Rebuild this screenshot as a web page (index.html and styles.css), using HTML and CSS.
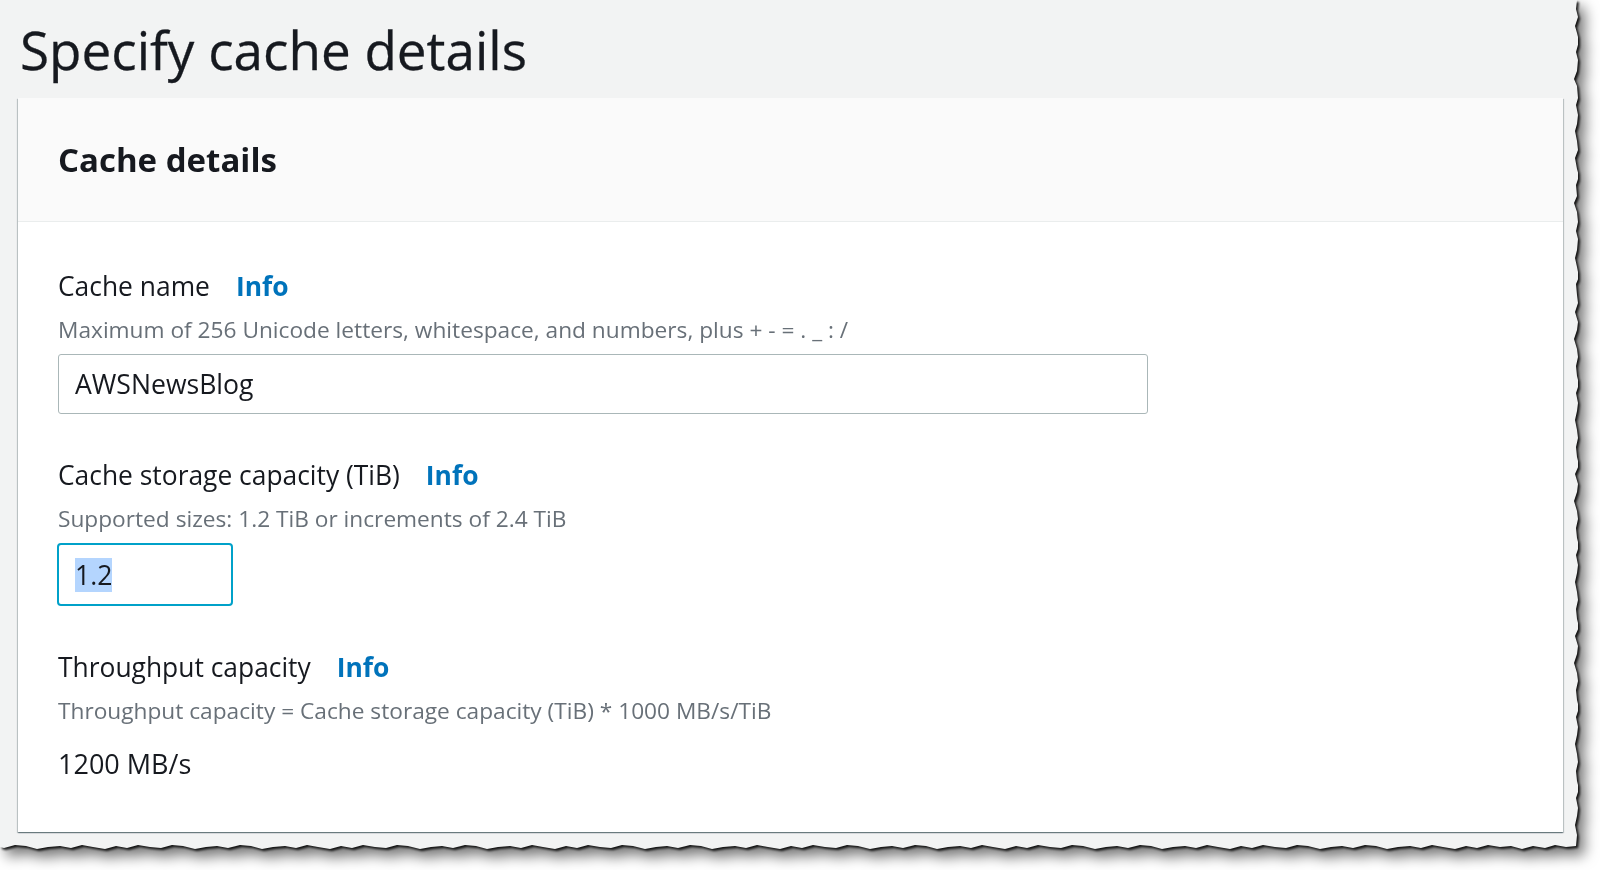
FILE: index.html
```html
<!DOCTYPE html>
<html lang="en">
<head>
<meta charset="utf-8">
<title>Specify cache details</title>
<link rel="stylesheet" href="styles.css">
</head>
<body>
<div class="sheet-wrap">
  <div class="sheet">
    <h1 class="title">Specify cache details</h1>
    <section class="card">
      <header class="card-header">
        <h2 class="card-title">Cache details</h2>
      </header>
      <div class="card-body">
        <div class="field">
          <div class="label-row"><span class="label">Cache name</span><a class="info">Info</a></div>
          <div class="desc">Maximum of 256 Unicode letters, whitespace, and numbers, plus + - = . _ : /</div>
          <div class="input input-wide">AWSNewsBlog</div>
        </div>
        <div class="field">
          <div class="label-row"><span class="label">Cache storage capacity (TiB)</span><a class="info">Info</a></div>
          <div class="desc">Supported sizes: 1.2 TiB or increments of 2.4 TiB</div>
          <div class="input input-small input-focus"><span class="selected">1.2</span></div>
        </div>
        <div class="field">
          <div class="label-row"><span class="label">Throughput capacity</span><a class="info">Info</a></div>
          <div class="desc">Throughput capacity = Cache storage capacity (TiB) * 1000 MB/s/TiB</div>
          <div class="value">1200 MB/s</div>
        </div>
      </div>
    </section>
  </div>
</div>
</body>
</html>
```

FILE: styles.css
```css
html, body {
  margin: 0;
  padding: 0;
  background: #ffffff;
}

body {
  font-family: "Open Sans", "Noto Sans", Arial, sans-serif;
  color: #16191f;
  width: 1600px;
  height: 870px;
  overflow: hidden;
}

.sheet-wrap {
  width: 1578px;
  height: 850px;
  filter: drop-shadow(2px 2px 1px rgba(0, 0, 0, 0.85)) drop-shadow(6px 7px 7px rgba(0, 0, 0, 0.55));
}

.sheet {
  width: 1578px;
  height: 850px;
  background: #f2f3f3;
  box-sizing: border-box;
  padding-top: 20px;
  clip-path: polygon(
    0 0, 1577px 0, 1576px 9px, 1578px 17px, 1575px 26px, 1577px 33px, 1579px 41px, 1576px 52px,
    1578px 60px, 1577px 71px, 1574px 79px, 1577px 86px, 1578px 98px, 1576px 105px, 1578px 115px,
    1577px 124px, 1575px 131px, 1577px 141px, 1578px 150px, 1575px 158px, 1577px 169px, 1579px 176px,
    1576px 185px, 1577px 196px, 1574px 203px, 1577px 212px, 1578px 222px, 1576px 231px, 1578px 239px,
    1577px 250px, 1575px 258px, 1577px 267px, 1579px 277px, 1576px 284px, 1577px 295px, 1578px 303px,
    1575px 312px, 1578px 322px, 1577px 330px, 1574px 339px, 1577px 349px, 1578px 357px, 1576px 366px,
    1577px 376px, 1579px 384px, 1576px 393px, 1578px 403px, 1577px 411px, 1575px 420px, 1577px 430px,
    1578px 438px, 1576px 447px, 1577px 457px, 1579px 465px, 1575px 474px, 1578px 484px, 1577px 492px,
    1574px 501px, 1577px 511px, 1578px 519px, 1576px 528px, 1577px 538px, 1579px 546px, 1576px 555px,
    1578px 565px, 1577px 573px, 1575px 582px, 1577px 592px, 1578px 600px, 1576px 609px, 1577px 619px,
    1579px 627px, 1575px 636px, 1578px 646px, 1577px 654px, 1574px 663px, 1577px 673px, 1578px 681px,
    1576px 690px, 1577px 700px, 1579px 708px, 1576px 717px, 1578px 727px, 1577px 735px, 1575px 744px,
    1577px 754px, 1578px 762px, 1576px 771px, 1577px 781px, 1579px 789px, 1576px 798px, 1578px 808px,
    1577px 816px, 1575px 825px, 1577px 835px, 1576px 846px,
    1566px 847px, 1555px 845px, 1545px 848px, 1533px 846px, 1522px 849px, 1511px 846px, 1500px 847px,
    1488px 845px, 1477px 848px, 1466px 846px, 1455px 849px, 1443px 847px, 1432px 845px, 1421px 848px,
    1410px 846px, 1398px 847px, 1387px 849px, 1376px 846px, 1365px 845px, 1353px 848px, 1342px 846px,
    1331px 847px, 1320px 849px, 1308px 846px, 1297px 845px, 1286px 848px, 1275px 847px, 1263px 845px,
    1252px 848px, 1241px 846px, 1230px 849px, 1218px 847px, 1207px 845px, 1196px 848px, 1185px 846px,
    1173px 847px, 1162px 849px, 1151px 846px, 1140px 845px, 1128px 848px, 1117px 846px, 1106px 847px,
    1095px 849px, 1083px 846px, 1072px 845px, 1061px 848px, 1050px 847px, 1038px 845px, 1027px 848px,
    1016px 846px, 1005px 849px, 993px 847px, 982px 845px, 971px 848px, 960px 846px, 948px 847px,
    937px 849px, 926px 846px, 915px 845px, 903px 848px, 892px 846px, 881px 847px, 870px 849px,
    858px 846px, 847px 845px, 836px 848px, 825px 847px, 813px 845px, 802px 848px, 791px 846px,
    780px 849px, 768px 847px, 757px 845px, 746px 848px, 735px 846px, 723px 847px, 712px 849px,
    701px 846px, 690px 845px, 678px 848px, 667px 846px, 656px 847px, 645px 849px, 633px 846px,
    622px 845px, 611px 848px, 600px 847px, 588px 845px, 577px 848px, 566px 846px, 555px 849px,
    543px 847px, 532px 845px, 521px 848px, 510px 846px, 498px 847px, 487px 849px, 476px 846px,
    465px 845px, 453px 848px, 442px 846px, 431px 847px, 420px 849px, 408px 846px, 397px 845px,
    386px 848px, 375px 847px, 363px 845px, 352px 848px, 341px 846px, 330px 849px, 318px 847px,
    307px 845px, 296px 848px, 285px 846px, 273px 847px, 262px 849px, 251px 846px, 240px 845px,
    228px 848px, 217px 846px, 206px 847px, 195px 849px, 183px 846px, 172px 845px, 161px 848px,
    150px 847px, 138px 845px, 127px 848px, 116px 846px, 105px 849px, 93px 847px, 82px 845px,
    71px 848px, 60px 846px, 48px 847px, 37px 849px, 26px 846px, 15px 845px, 4px 848px, 0 847px
  );
}

.title {
  margin: 0 0 18px 20px;
  font-size: 53px;
  line-height: 60px;
  font-weight: 400;
  color: #16191f;
  -webkit-text-stroke: 0.3px #16191f;
}

.card {
  margin-left: 18px;
  width: 1545px;
  height: 734px;
  background: #ffffff;
  box-shadow: 0 1px 1px 0 rgba(0, 28, 36, 0.35), 1px 1px 1px 0 rgba(0, 28, 36, 0.18), -1px 1px 1px 0 rgba(0, 28, 36, 0.18);
  display: flex;
  flex-direction: column;
}

.card-header {
  height: 123px;
  background: #fafafa;
  border-bottom: 1px solid #eaeded;
  display: flex;
  align-items: center;
  padding-left: 40px;
}

.card-title {
  margin: 0;
  font-size: 33px;
  line-height: 40px;
  font-weight: 700;
  color: #16191f;
}

.card-body {
  padding: 46px 40px 0 40px;
  display: flex;
  flex-direction: column;
  gap: 43px;
}

.field {
  display: flex;
  flex-direction: column;
  align-items: flex-start;
}

.label-row {
  display: flex;
  align-items: baseline;
  gap: 26px;
  font-size: 26.4px;
  line-height: 36px;
}

.label {
  color: #16191f;
}

.info {
  color: #0073bb;
  font-weight: 700;
  text-decoration: none;
}

.desc {
  margin-top: 11px;
  font-size: 22.7px;
  line-height: 30px;
  color: #687078;
}

.input {
  margin-top: 9px;
  box-sizing: border-box;
  height: 60px;
  border: 1px solid #aab7b8;
  border-radius: 3px;
  background: #ffffff;
  display: flex;
  align-items: center;
  padding-left: 16px;
  font-size: 26.6px;
  color: #16191f;
}

.input-wide {
  width: 1090px;
}

.input-small {
  width: 176px;
}

.input.input-focus {
  height: 63px;
  margin-left: -1px;
  border: 2px solid #00a1c9;
  border-radius: 4px;
}

.selected {
  background: #b4d5fe;
  line-height: 34px;
}

.value {
  margin-top: 20px;
  font-size: 27px;
  line-height: 36px;
  color: #16191f;
}
```
